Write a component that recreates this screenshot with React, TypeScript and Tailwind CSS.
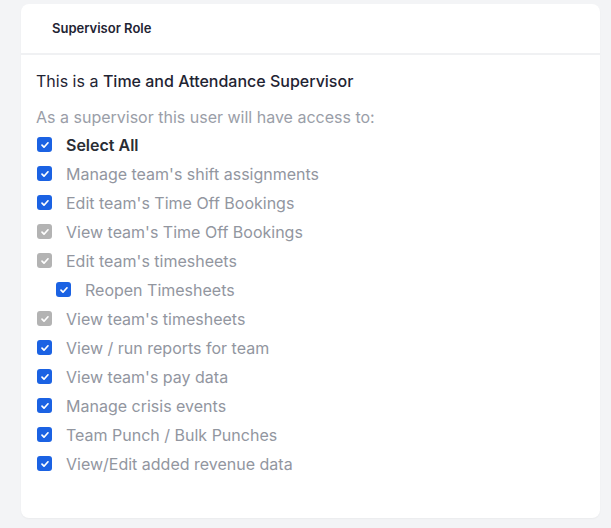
import { FC } from "react";

type Perm = { label: string; disabled?: boolean; indent?: boolean };

const perms: Perm[] = [
  { label: "Manage team's shift assignments" },
  { label: "Edit team's Time Off Bookings" },
  { label: "View team's Time Off Bookings", disabled: true },
  { label: "Edit team's timesheets", disabled: true },
  { label: "Reopen Timesheets", indent: true },
  { label: "View team's timesheets", disabled: true },
  { label: "View / run reports for team" },
  { label: "View team's pay data" },
  { label: "Manage crisis events" },
  { label: "Team Punch / Bulk Punches" },
  { label: "View/Edit added revenue data" },
];

const Check: FC<{ disabled?: boolean }> = ({ disabled }) => (
  <span
    className={
      disabled
        ? "flex h-[15px] w-[15px] shrink-0 items-center justify-center rounded-[3px] bg-[#b3b3b3]"
        : "flex h-[15px] w-[15px] shrink-0 items-center justify-center rounded-[3px] bg-[#1b62e3]"
    }
  >
    <svg width="10" height="10" viewBox="0 0 10 10" fill="none">
      <path
        d="M2 5.2l2 2 4-4.4"
        stroke="white"
        strokeWidth="1.7"
        strokeLinecap="round"
        strokeLinejoin="round"
      />
    </svg>
  </span>
);

const App: FC = () => {
  return (
    <div
      className="min-h-[528px] bg-[#f3f4f6] pl-[21px] pr-[11px] pt-[4px] pb-[11px]"
      style={{ fontFamily: "Inter, 'Noto Sans', sans-serif" }}
    >
      <div className="rounded-[8px] bg-white shadow-[0_1px_2px_rgba(0,0,0,0.04)]">
        {/* Header */}
        <div className="flex h-[51px] items-center border-b-2 border-[#f0f1f3] pl-[31px]">
          <span className="text-[13px] font-semibold text-[#1f2433]">
            Supervisor Role
          </span>
        </div>

        {/* Body */}
        <div className="px-[15px] pt-[14px] pb-[40px]">
          <p className="text-[16px] leading-[24px] text-[#1f2433]">
            This is a <span className="font-medium">Time and Attendance Supervisor</span>
          </p>
          <p className="mt-[12px] text-[16px] leading-[24px] text-[#9a9ea8]">
            As a supervisor this user will have access to:
          </p>
          <div className="mt-[1px] flex flex-col">
            <div className="flex h-[29px] items-center pl-[1px]">
              <Check />
              <span className="ml-[14px] text-[16px] font-semibold text-[#2a2d34]">
                Select All
              </span>
            </div>
            {perms.map((p) => (
              <div
                key={p.label}
                className={
                  p.indent
                    ? "flex h-[29px] items-center pl-[20px]"
                    : "flex h-[29px] items-center pl-[1px]"
                }
              >
                <Check disabled={p.disabled} />
                <span className="ml-[14px] text-[16px] text-[#92969f]">
                  {p.label}
                </span>
              </div>
            ))}
          </div>
        </div>
      </div>
    </div>
  );
};

export default App;
